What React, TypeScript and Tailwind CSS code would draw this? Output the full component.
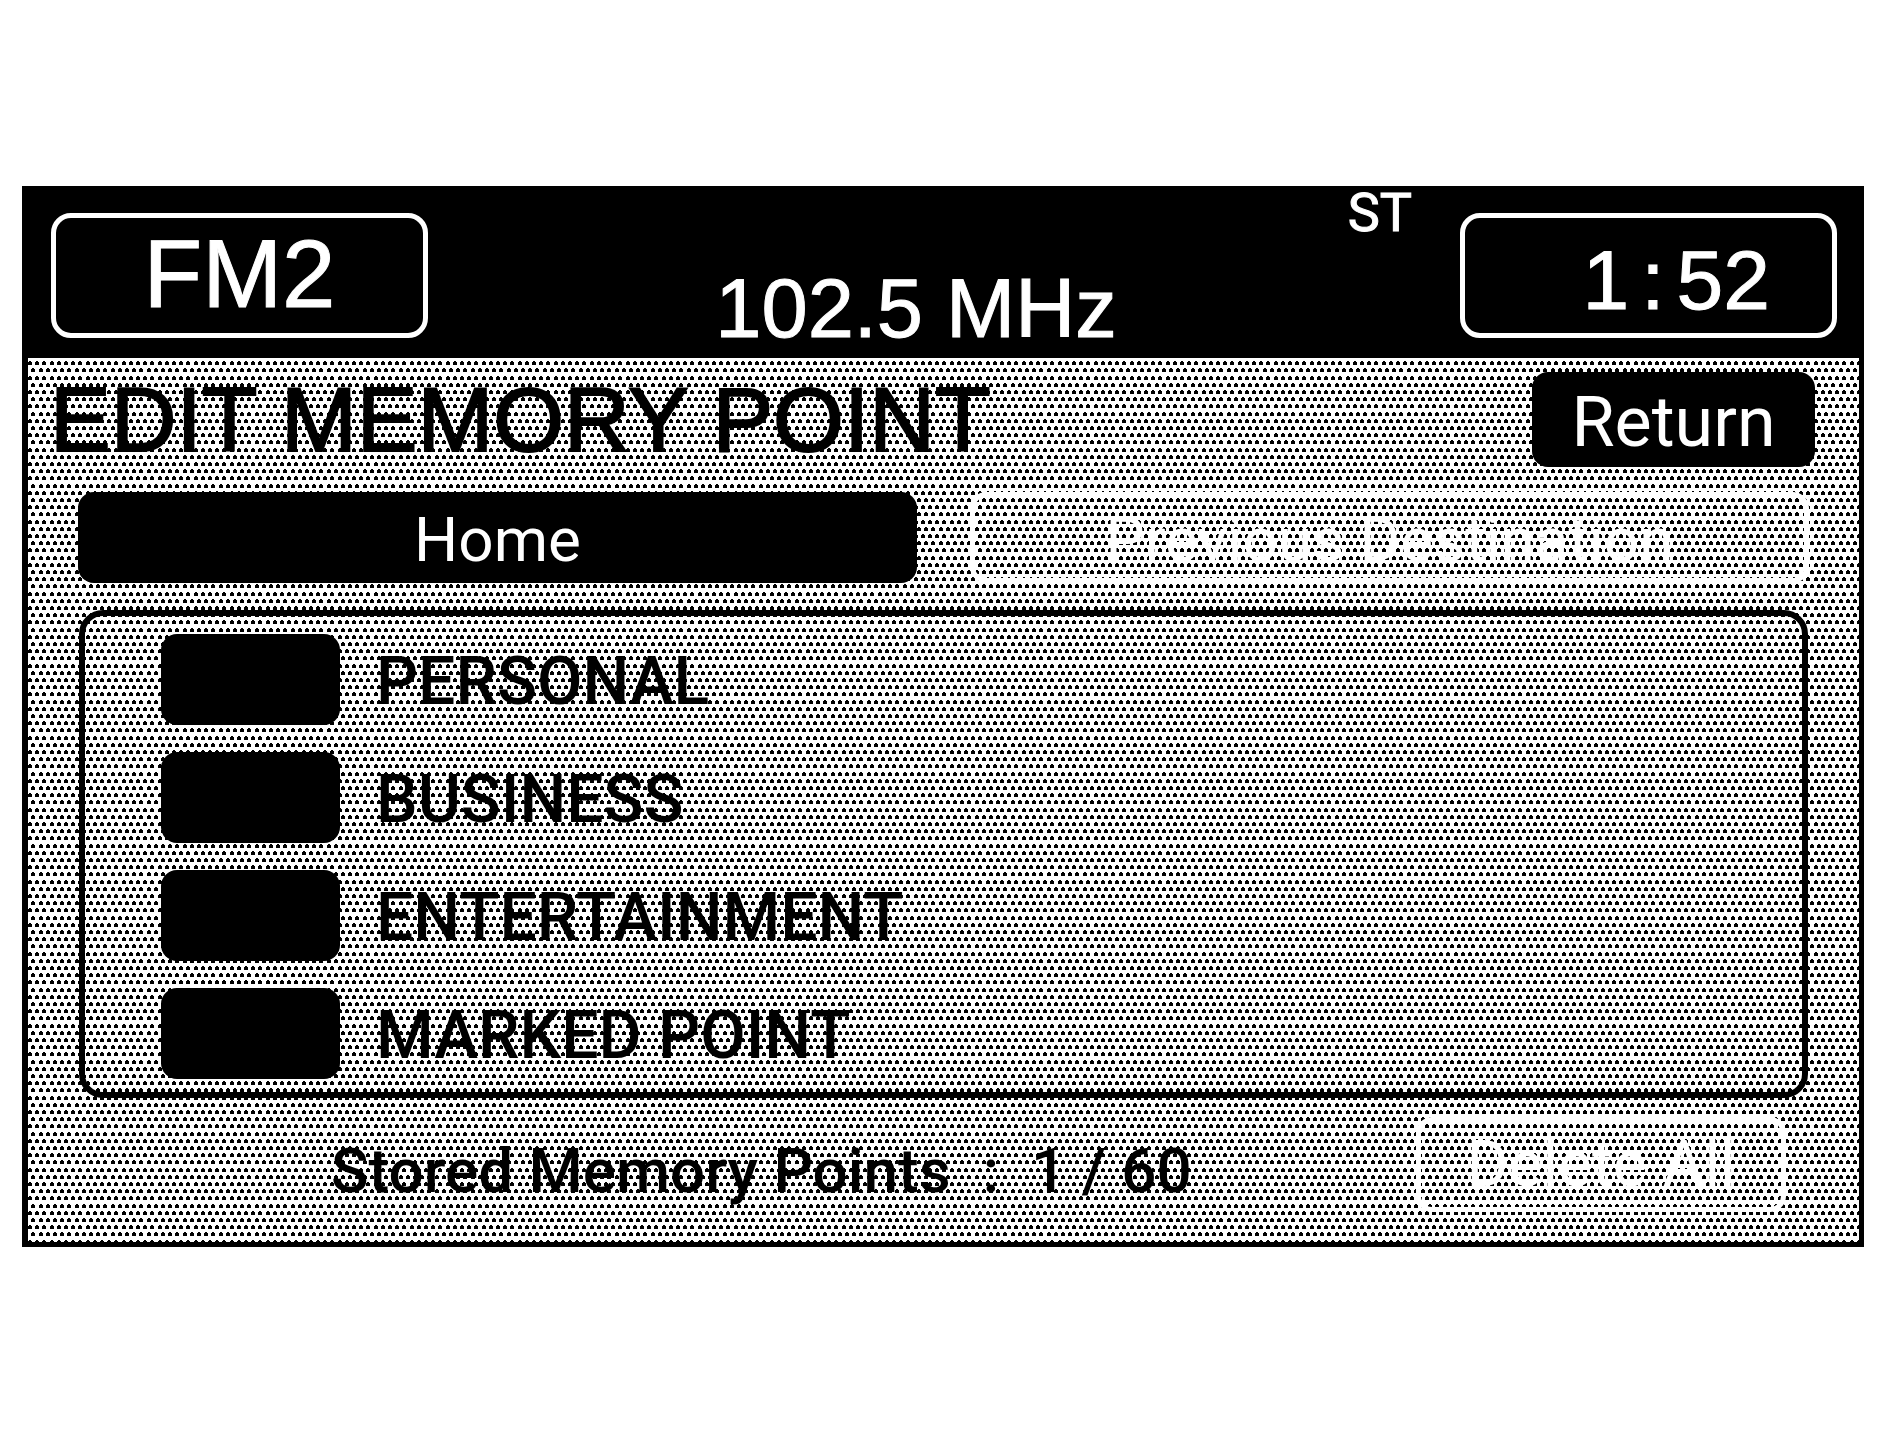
import clsx from 'clsx'

const CATEGORIES = [
    { id: 'personal', label: 'PERSONAL' },
    { id: 'business', label: 'BUSINESS' },
    { id: 'entertainment', label: 'ENTERTAINMENT' },
    { id: 'marked-point', label: 'MARKED POINT' },
]

// one halftone tile: 5 dots across, 10 staggered rows down
const ROWS = [0, 7, 15, 22, 29, 36, 43, 51, 58, 65]
const EVEN_COLS = [0, 7, 14, 22, 29]
const ODD_COLS = [3, 11, 18, 25, 32]

const TILE_PATH = ROWS.map((y, i) =>
    (i % 2 === 0 ? EVEN_COLS : ODD_COLS)
        .map((x) => `M${x + 1} ${y}h2v1h1v3h-4v-3h1z`)
        .join('')
).join('')

function Halftone() {
    return (
        <svg className="absolute inset-0 h-full w-full" aria-hidden="true" shapeRendering="crispEdges">
            <defs>
                <pattern id="halftone" y="3" width="36" height="72" patternUnits="userSpaceOnUse">
                    <path d={TILE_PATH} fill="#000" />
                </pattern>
            </defs>
            <rect width="100%" height="100%" fill="url(#halftone)" />
        </svg>
    )
}

interface PanelButtonProps {
    children: React.ReactNode
    className?: string
    disabled?: boolean
}

function PanelButton({ children, className, disabled = false }: PanelButtonProps) {
    return (
        <button
            type="button"
            disabled={disabled}
            className={clsx(
                'rounded-2xl leading-none text-white whitespace-nowrap',
                disabled ? 'border-[5px] border-white bg-transparent' : 'bg-black',
                className
            )}
        >
            {children}
        </button>
    )
}

function StatusBar() {
    return (
        <header className="flex h-[167px] justify-between bg-black pl-[23px] pr-[22px] pt-[22px] font-['Liberation_Sans',Arial,sans-serif] text-white [-webkit-text-stroke:1px_white]">
            <button
                type="button"
                className="h-[125px] w-[377px] rounded-[20px] border-[5px] border-white pb-1 text-[96px] leading-none"
            >
                FM2
            </button>
            <div className="-mt-[22px] flex flex-1 flex-col">
                <span className="mr-12 self-end font-[Roboto,sans-serif] text-[54px] leading-[44px]">ST</span>
                <span className="mt-8 pr-14 text-center text-[83px] leading-[84px]">102.5 MHz</span>
            </div>
            <div className="flex h-[125px] w-[377px] items-center justify-end gap-3 rounded-[20px] border-[5px] border-white pr-[62px] pt-2 text-[84px] leading-none">
                <span>1</span>
                <span>:</span>
                <span>52</span>
            </div>
        </header>
    )
}

export default function App() {
    return (
        <div className="min-h-screen bg-white pb-[186px] pl-[22px] pr-[23px] pt-[186px]">
            <div className="border-[5px] border-l-[6px] border-black text-black">
                <StatusBar />
                <main className="relative bg-white font-[Roboto,sans-serif]">
                    <Halftone />
                    <div className="relative pb-[30px] pt-[14px]">
                        <div className="flex items-center justify-between pl-[22px] pr-[44px]">
                            <h1 className="font-['Liberation_Sans',Arial,sans-serif] text-[91px] leading-[95px] whitespace-nowrap [-webkit-text-stroke:2px_black]">
                                EDIT MEMORY POINT
                            </h1>
                            <PanelButton className="h-[95px] w-[283px] pt-1 text-[70px]">Return</PanelButton>
                        </div>

                        <div className="mt-[25px] grid grid-cols-2 gap-[53px] px-[50px]">
                            <PanelButton className="h-[91px] pt-1 text-[62px]">Home</PanelButton>
                            <PanelButton disabled className="h-[91px] pt-1 text-[62px]">
                                Previous Destination
                            </PanelButton>
                        </div>

                        <ul className="mx-[51px] mt-[27px] flex flex-col gap-[27px] rounded-[24px] border-[6px] border-black pb-[13px] pl-[76px] pt-[18px]">
                            {CATEGORIES.map(({ id, label }) => (
                                <li key={id} className="flex items-center gap-9">
                                    <button
                                        type="button"
                                        aria-labelledby={id}
                                        className="h-[91px] w-[179px] rounded-2xl bg-black"
                                    />
                                    <span id={id} className="pt-1 text-[66px] font-medium leading-none">
                                        {label}
                                    </span>
                                </li>
                            ))}
                        </ul>

                        <div className="mt-[19px] flex items-center justify-between pl-[303px] pr-[73px]">
                            <p className="flex gap-8 pt-3 text-[62px] font-medium leading-none whitespace-nowrap">
                                <span>Stored Memory Points</span>
                                <span>:</span>
                                <span>1 / 60</span>
                            </p>
                            <PanelButton disabled className="h-[95px] w-[370px] text-[64px]">
                                Delete All
                            </PanelButton>
                        </div>
                    </div>
                </main>
            </div>
        </div>
    )
}
